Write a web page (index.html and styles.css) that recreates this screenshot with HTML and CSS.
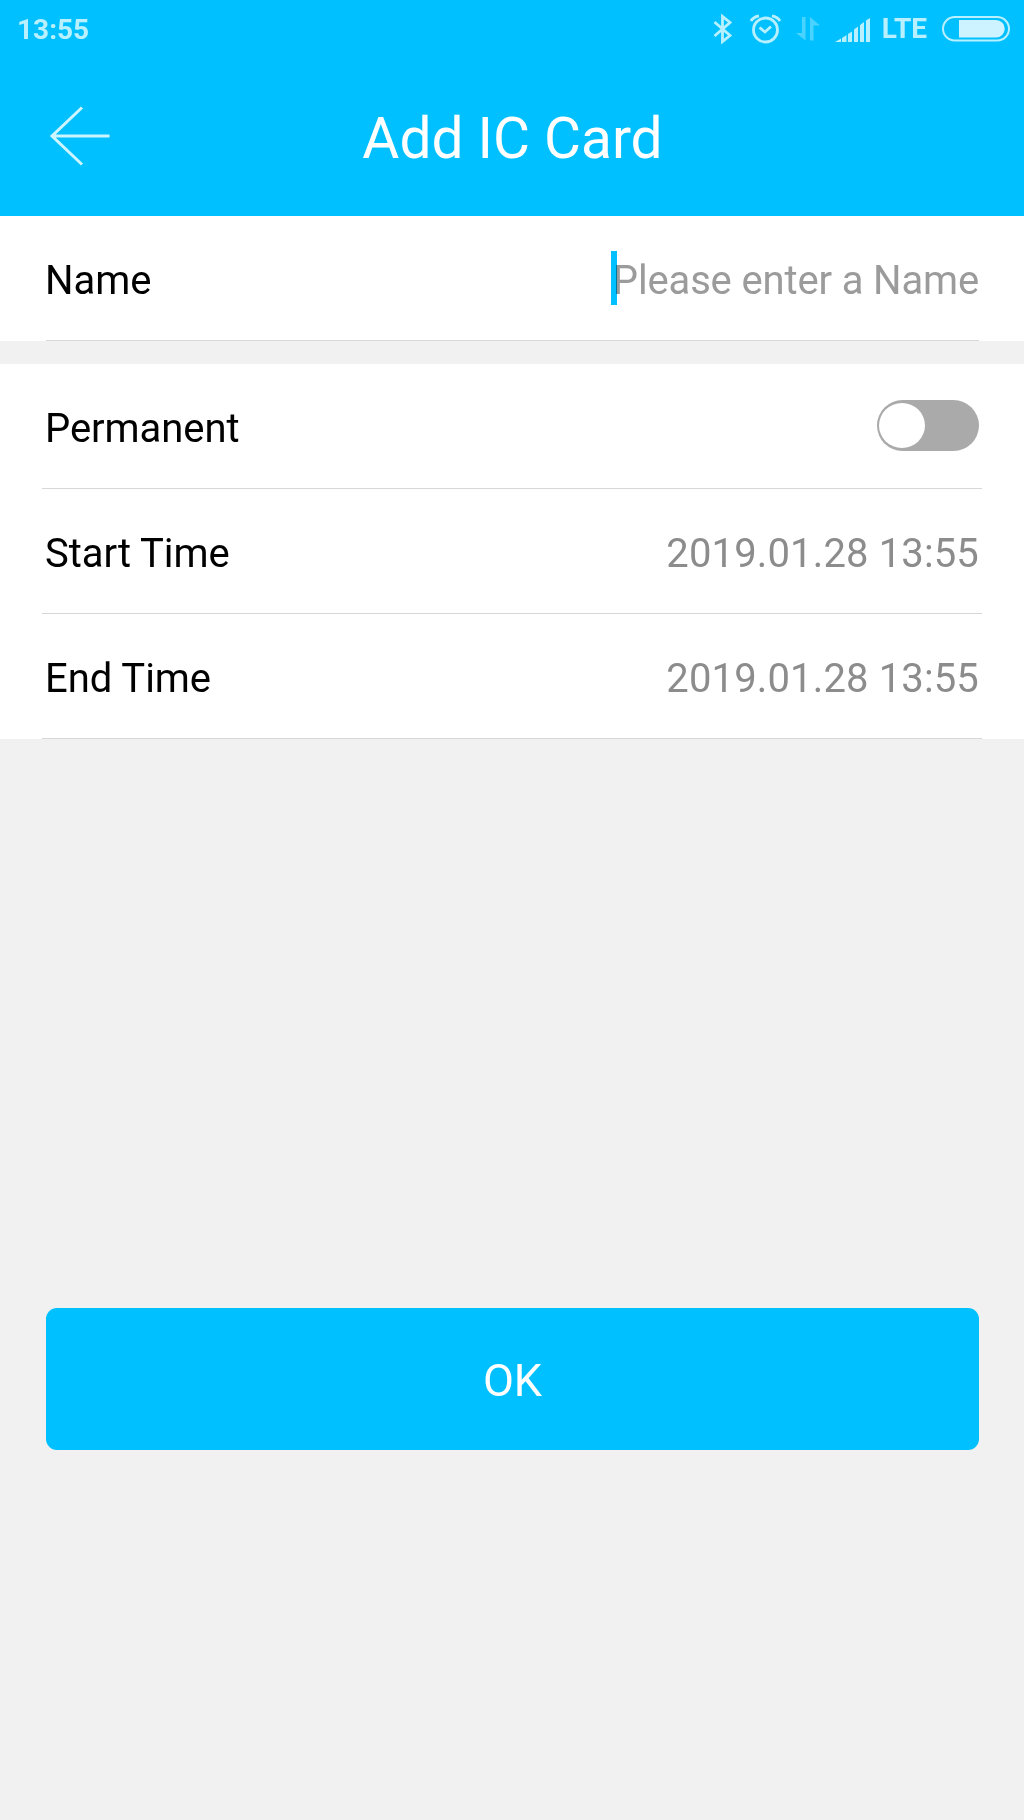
FILE: index.html
```html
<!DOCTYPE html>
<html lang="en">
<head>
<meta charset="utf-8">
<title>Add IC Card</title>
<link rel="stylesheet" href="styles.css">
</head>
<body>
<header class="header">
  <div class="status">
    <span class="clock">13:55</span>
    <div class="indicators">
      <svg class="bluetooth" width="20" height="32" viewBox="0 0 20 32" fill="none" stroke="currentColor" stroke-width="2.8"><path d="M1.500 9L17 22.500L9.500 28.500V3.500L17 9.500L1.500 23"/></svg>
      <svg class="alarm" width="32" height="32" viewBox="0 0 32 32" fill="none" stroke="currentColor" stroke-width="2.800"><circle cx="16.500" cy="17" r="12"/><path d="M10.500 14.500L16 19L22 13.500M2 8Q4 4 10 2.800M23 2.800Q29 4 31 8"/></svg>
      <svg class="data" width="26" height="28" viewBox="0 0 26 28" fill="currentColor"><path d="M7 2H10.500V25.500L1 18H7zM15 25.500V2L25 10.500H18.500V25.500z"/></svg>
      <svg class="signal" width="36" height="26" viewBox="0 0 36 26" fill="currentColor"><path d="M0 25L6 21.500V25zM7 21L11.500 18V25H7zM13 17L17 14.500V25H13zM19 12.500L23 9.500V25H19zM25 8L29 5V25H25zM31 3.500L35 1V25H31z"/></svg>
      <span class="network">LTE</span>
      <svg class="battery" width="68" height="26" viewBox="0 0 68 26"><rect x="1" y="1" width="66" height="23.500" rx="11.750" fill="none" stroke="currentColor" stroke-width="2"/><path d="M17 4H54A8.750 8.750 0 0 1 54 21.500H17z" fill="#ccf3ff"/></svg>
    </div>
  </div>
  <div class="toolbar">
    <svg class="back" width="62" height="60" viewBox="0 0 62 60" fill="none" stroke="currentColor" stroke-width="3"><path d="M34 1.500L4 30L34 58.500M4 30H61.500"/></svg>
    <h1 class="title">Add IC Card</h1>
  </div>
</header>
<main>
  <section class="group group-name">
    <div class="row"><span class="label">Name</span><span class="placeholder">Please enter a Name<i class="caret"></i></span></div>
  </section>
  <section class="group group-time">
    <div class="row"><span class="label">Permanent</span><span class="switch"><span class="knob"></span></span></div>
    <div class="row"><span class="label">Start Time</span><span class="value">2019.01.28 13:55</span></div>
    <div class="row"><span class="label">End Time</span><span class="value">2019.01.28 13:55</span></div>
  </section>
  <button class="ok" type="button">OK</button>
</main>
</body>
</html>
```
FILE: styles.css
```css
* { box-sizing: border-box; }
body {
  margin: 0;
  min-height: 1820px;
  background: #f1f1f1;
  font-family: Roboto, "Liberation Sans", sans-serif;
  color: #000;
}
svg { display: block; flex: none; }
.header { height: 216px; background: #00c0ff; color: #fff; }
.status {
  display: flex;
  justify-content: space-between;
  height: 58px;
  padding: 0 14px 0 17px;
  color: #b8f0ff;
  font-size: 28px;
  font-weight: 700;
  line-height: 60px;
}
.indicators { display: flex; align-items: center; }
.bluetooth { margin-bottom: 1px; }
.alarm { margin: 0 0 1px 16px; }
.data { margin-left: 14px; margin-bottom: 1px; opacity: .4; }
.signal { margin: 1px 11px 0 14px; }
.battery { margin-left: 15px; }
.toolbar {
  display: grid;
  grid-template-columns: 62px 1fr 62px;
  align-items: center;
  height: 156px;
  padding: 0 48px;
}
.back { color: #ccf5ff; }
.title {
  margin: 5px 0 0 1px;
  text-align: center;
  font-size: 56.8px;
  font-weight: 400;
  line-height: 66px;
  white-space: nowrap;
}
.group { background: #fff; }
.group-name { padding: 0 45px 0 46px; }
.group-time { margin-top: 23px; padding: 0 42px; }
.row {
  display: flex;
  align-items: center;
  justify-content: space-between;
  height: 125px;
  border-bottom: 1px solid #d8d8d8;
  font-size: 40px;
  line-height: 48px;
}
.group-time .row { padding: 0 3px 0 4px; }
.label, .value, .placeholder { padding-top: 6px; }
.label { margin-left: -1px; letter-spacing: -.05px; }
.placeholder { position: relative; color: #9b9b9b; letter-spacing: -.15px; }
.value { color: #8c8c8c; letter-spacing: .14px; }
.caret {
  position: absolute;
  left: -2px;
  top: 0;
  width: 6px;
  height: 54px;
  background: #00c0ff;
  mix-blend-mode: multiply;
}
.switch {
  width: 102px;
  height: 51px;
  margin-bottom: 1px;
  padding: 3px 2px;
  border-radius: 26px;
  background: #aaa;
}
.knob {
  display: block;
  width: 46px;
  height: 45px;
  border-radius: 50%;
  background: #fff;
}
.ok {
  display: block;
  width: 933px;
  height: 142px;
  margin: 569px auto 0;
  padding: 2px 0 0 1px;
  border: 0;
  border-radius: 11px;
  background: #00c0ff;
  color: #fff;
  font: 400 45px Roboto, "Liberation Sans", sans-serif;
}
```
